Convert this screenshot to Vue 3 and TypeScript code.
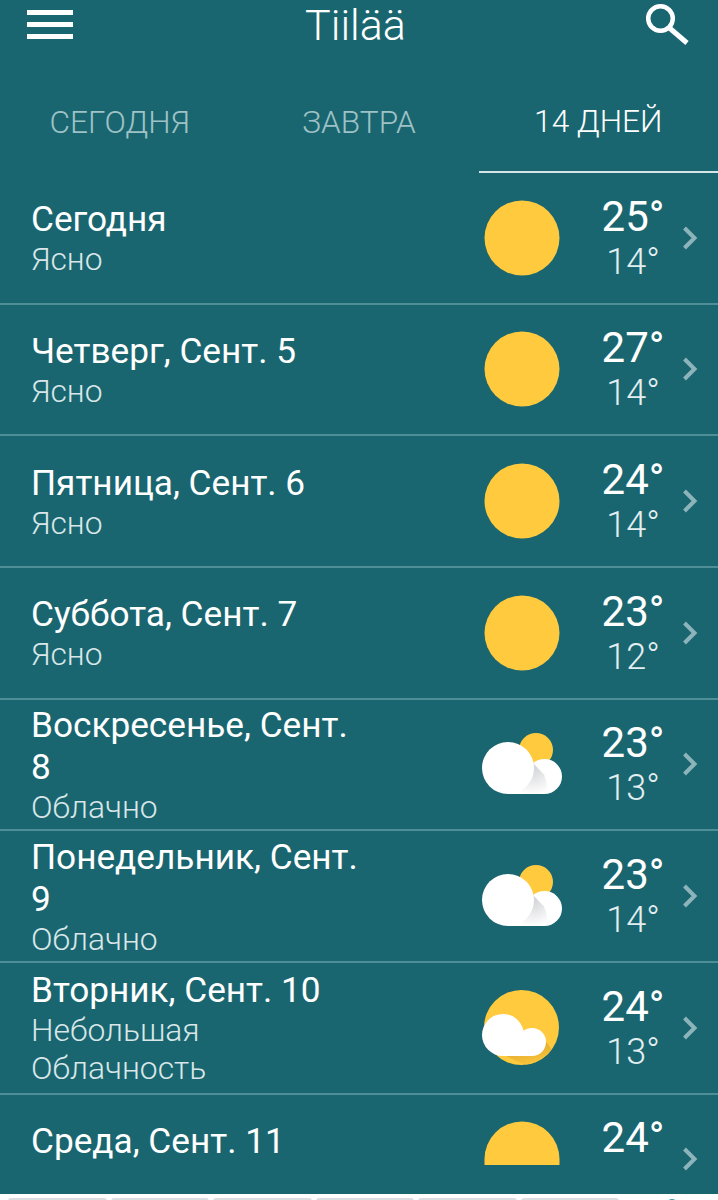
<template>
  <div class="screen">
    <header class="topbar">
      <button class="icon-btn menu" aria-label="menu">
        <span></span><span></span><span></span>
      </button>
      <h1 class="title">Tiilää</h1>
      <button class="icon-btn search" aria-label="search">
        <svg width="48" height="48" viewBox="0 0 48 48">
          <circle cx="16.5" cy="19.5" r="12.3" fill="none" stroke="#fff" stroke-width="4.5" />
          <path d="M25.500 29 L43 44" stroke="#fff" stroke-width="5" fill="none" />
        </svg>
      </button>
    </header>

    <nav class="tabs">
      <div v-for="t in tabs" :key="t.label" class="tab" :class="{ active: t.active }">{{ t.label }}</div>
    </nav>

    <ul class="days">
      <li v-for="d in days" :key="d.name" class="day">
        <div class="info">
          <div class="name">{{ d.name }}</div>
          <div class="desc" :class="{ hidden: d.cut }">{{ d.desc }}</div>
        </div>
        <div class="icon">
          <svg v-if="d.icon === 'sun'" width="76" height="76" viewBox="0 0 76 76">
            <circle cx="38" cy="38" r="37.5" fill="#ffca3e" />
          </svg>
          <svg v-else-if="d.icon === 'half'" width="76" height="76" viewBox="0 0 76 76">
            <path d="M0.500 44 V38 A37.500 37.500 0 0 1 75.500 38 V44 Z" fill="#ffca3e" />
          </svg>
          <svg v-else-if="d.icon === 'cloudy'" width="80" height="62" viewBox="0 0 80 62">
            <defs>
              <radialGradient id="fold" gradientUnits="userSpaceOnUse" cx="50" cy="32" r="30">
                <stop offset="0" stop-color="#cfd0d4" />
                <stop offset="1" stop-color="#ffffff" />
              </radialGradient>
              <clipPath id="small-cloud">
                <path d="M26 43.500 H62.500 A17.500 17.500 0 0 1 62.500 61 H26 Z M62.500 26 A17.500 17.500 0 0 0 45 43.500 H62.500 Z" />
              </clipPath>
            </defs>
            <circle cx="54" cy="17" r="17" fill="#ffca3e" />
            <circle cx="62.500" cy="43.500" r="17.500" fill="#fff" />
            <rect x="26" y="43.500" width="36.500" height="17.500" fill="#fff" />
            <path d="M50 29 L80 60 L60 61 L26 61 Z" fill="url(#fold)" clip-path="url(#small-cloud)" />
            <circle cx="26" cy="35" r="26" fill="#fff" />
            <rect x="26" y="50" width="14" height="11" fill="#fff" />
          </svg>
          <svg v-else width="80" height="76" viewBox="0 0 80 76">
            <defs>
              <linearGradient id="sun-shade" x1="0.3" y1="0.2" x2="0.7" y2="1">
                <stop offset="0" stop-color="#deaa2e" />
                <stop offset="1" stop-color="#ffca3e" />
              </linearGradient>
              <clipPath id="sun-disc">
                <circle cx="39.500" cy="37.500" r="37.500" />
              </clipPath>
            </defs>
            <circle cx="39.500" cy="37.500" r="37.500" fill="#ffca3e" />
            <path d="M24 66 H50 L64 52 L72 62 L46 76 Z" fill="url(#sun-shade)" clip-path="url(#sun-disc)" />
            <circle cx="21" cy="45" r="21" fill="#fff" />
            <circle cx="50" cy="52" r="14" fill="#fff" />
            <rect x="21" y="50" width="29" height="16" fill="#fff" />
          </svg>
        </div>
        <div class="temps">
          <div class="high">{{ d.high }}°</div>
          <div class="low" :class="{ hidden: d.cut }">{{ d.low }}°</div>
        </div>
        <svg class="chev" width="16" height="24" viewBox="0 0 16 24">
          <path d="M2.500 2 L12.500 12 L2.500 22" fill="none" stroke="#8eb4bb" stroke-width="4" />
        </svg>
      </li>
    </ul>

    <div class="bottom">
      <span v-for="i in 6" :key="i" class="strip"></span>
      <span class="dot"></span>
    </div>
  </div>
</template>

<script setup lang="ts">
interface Day {
  name: string
  desc: string
  icon: 'sun' | 'half' | 'cloudy' | 'partly'
  high: number
  low: number
  cut?: boolean
}

const tabs = [
  { label: 'СЕГОДНЯ', active: false },
  { label: 'ЗАВТРА', active: false },
  { label: '14 ДНЕЙ', active: true }
]

const days: Day[] = [
  { name: 'Сегодня', desc: 'Ясно', icon: 'sun', high: 25, low: 14 },
  { name: 'Четверг, Сент. 5', desc: 'Ясно', icon: 'sun', high: 27, low: 14 },
  { name: 'Пятница, Сент. 6', desc: 'Ясно', icon: 'sun', high: 24, low: 14 },
  { name: 'Суббота, Сент. 7', desc: 'Ясно', icon: 'sun', high: 23, low: 12 },
  { name: 'Воскресенье, Сент. 8', desc: 'Облачно', icon: 'cloudy', high: 23, low: 13 },
  { name: 'Понедельник, Сент. 9', desc: 'Облачно', icon: 'cloudy', high: 23, low: 14 },
  { name: 'Вторник, Сент. 10', desc: 'Небольшая Облачность', icon: 'partly', high: 24, low: 13 },
  // нижняя строка уходит за край списка
  { name: 'Среда, Сент. 11', desc: 'Ясно', icon: 'half', high: 24, low: 13, cut: true }
]
</script>

<style>
html,
body {
  margin: 0;
  background: #fff;
}
</style>

<style scoped>
.screen {
  width: 718px;
  height: 1200px;
  overflow: hidden;
  background: #fff;
  color: #fff;
  font-family: Roboto, "Noto Sans", sans-serif;
  display: flex;
  flex-direction: column;
}

.topbar {
  height: 50px;
  flex: none;
  background: #1a6670;
  display: flex;
  align-items: center;
  justify-content: space-between;
  padding: 0 28px 0 27px;
}

.icon-btn {
  background: none;
  border: 0;
  padding: 0;
  display: flex;
}

.menu {
  flex-direction: column;
  gap: 7px;
  width: 46px;
  margin-bottom: 2px;
}

.menu span {
  display: block;
  height: 5px;
  background: #fff;
}

.title {
  flex: 1;
  margin: 0;
  text-align: center;
  font-size: 43px;
  font-weight: 300;
  line-height: 50px;
  padding-right: 6px;
}

.search {
  margin-top: -4px;
  margin-right: -2px;
}

.tabs {
  display: grid;
  grid-template-columns: repeat(3, 1fr);
  height: 123px;
  flex: none;
  background: #1a6670;
}

.tab {
  display: flex;
  align-items: center;
  justify-content: center;
  font-size: 31.6px;
  font-weight: 300;
  color: #9fc2c6;
  padding-top: 22px;
  box-sizing: border-box;
  height: 123px;
}

.tab.active {
  color: #fff;
  border-bottom: 2px solid #d5e6e8;
}

.days {
  list-style: none;
  margin: 0;
  padding: 0;
  flex: 1;
  min-height: 0;
  overflow: hidden;
  background: #1a6670;
}

.day {
  height: 131.67px;
  box-sizing: border-box;
  border-bottom: 2px solid #4f8e96;
  display: flex;
  align-items: center;
  padding: 0 20px 0 31px;
}

.info {
  flex: 1;
  min-width: 0;
}

.name {
  max-width: 330px;
  font-size: 35.2px;
  line-height: 42px;
  margin-top: 1px;
}

.desc {
  max-width: 220px;
  font-size: 31.8px;
  font-weight: 300;
  line-height: 38px;
  color: #d9e7e9;
}

.hidden {
  visibility: hidden;
}

.icon {
  width: 120px;
  margin-right: 6px;
  display: flex;
  justify-content: center;
}

.temps {
  width: 90px;
  text-align: center;
  padding-top: 2px;
}

.high {
  font-size: 42px;
  line-height: 46px;
}

.low {
  font-size: 36px;
  font-weight: 300;
  line-height: 44px;
  color: #e3eef0;
}

.chev {
  margin-left: 4px;
}

.bottom {
  height: 6px;
  flex: none;
  box-sizing: border-box;
  background: #fff;
  display: flex;
  gap: 4px;
  padding: 4px 0 0 8px;
  overflow: hidden;
}

.strip {
  display: block;
  width: 98.5px;
  height: 6px;
  flex: none;
  border-radius: 3px 3px 0 0;
  background: #dcdde0;
}

.dot {
  display: block;
  flex: none;
  width: 12px;
  height: 12px;
  margin: 1px 0 0 43px;
  border-radius: 50%;
  background: #3a9aa8;
}
</style>
